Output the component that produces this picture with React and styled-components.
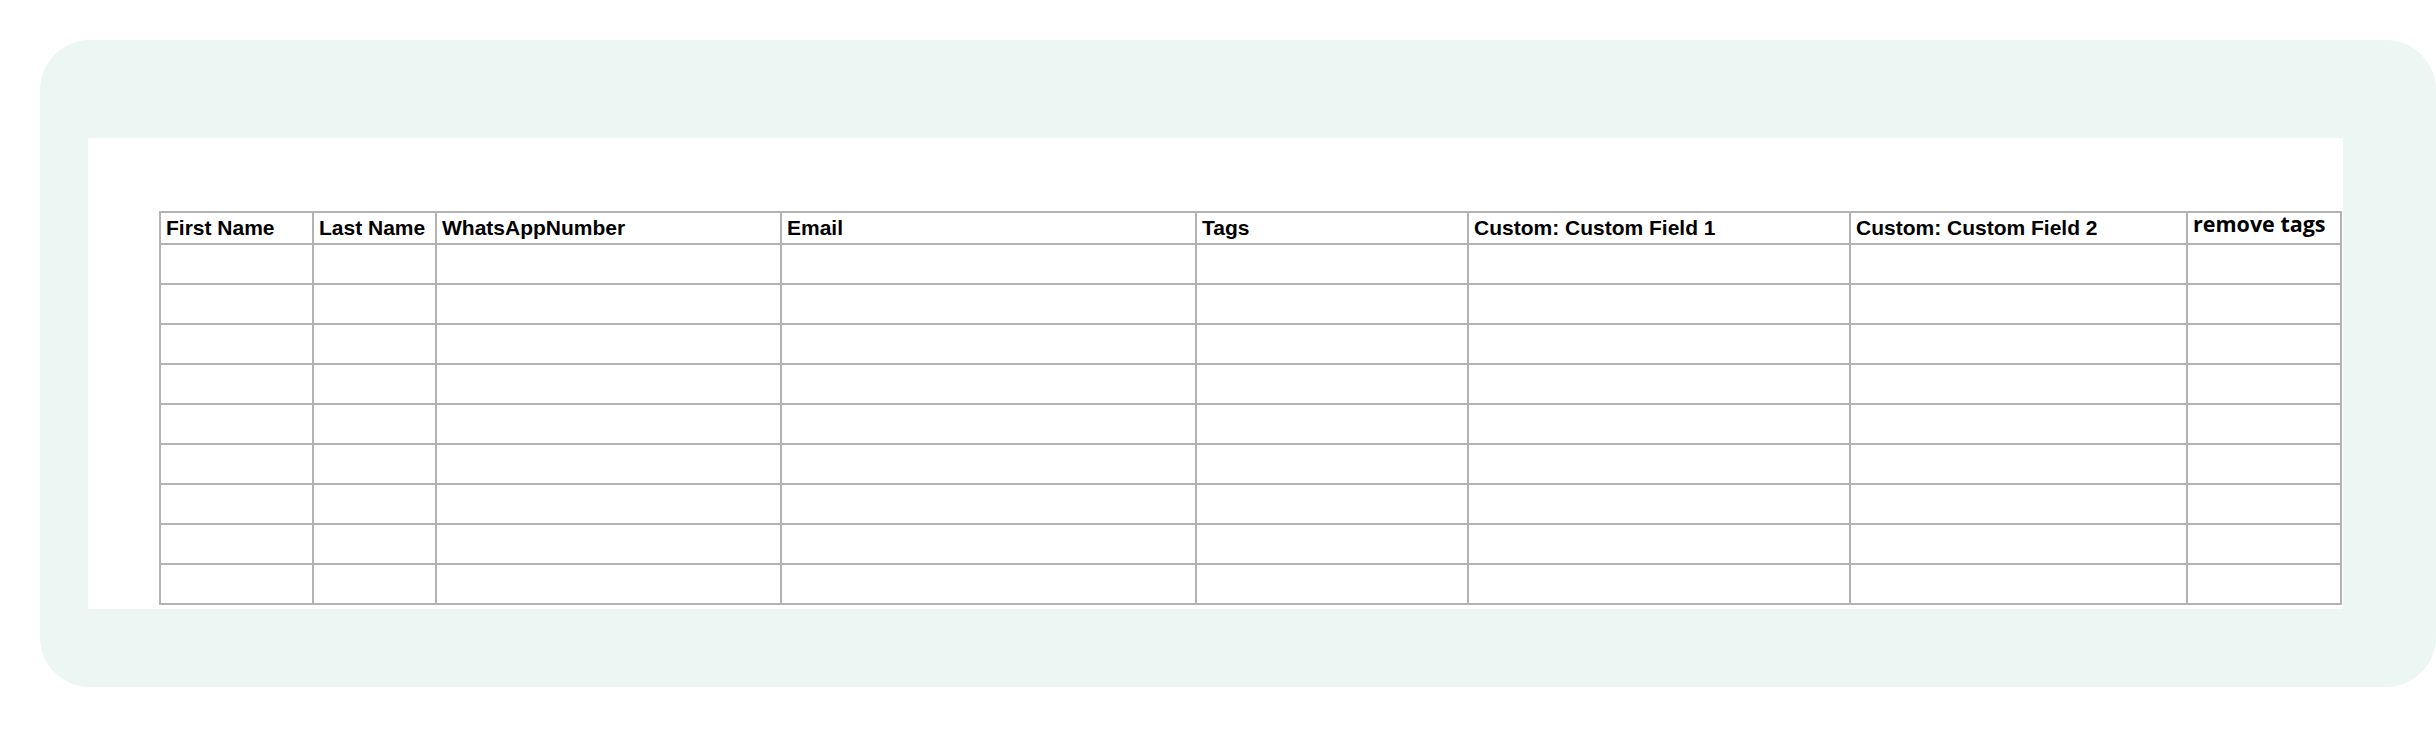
import React from 'react';
import styled, { createGlobalStyle } from 'styled-components';

const GlobalStyle = createGlobalStyle`
  html, body {
    margin: 0;
    padding: 0;
    background: #ffffff;
    font-family: 'Liberation Sans', Arial, sans-serif;
  }
`;

const Page = styled.div`
  padding: 40px 0 56px 40px;
  width: 2436px;
  box-sizing: border-box;
`;

const Card = styled.div`
  width: 2396px;
  box-sizing: border-box;
  background: #ecf6f2;
  border-radius: 50px;
  padding: 98px 93px 78px 48px;
`;

const Panel = styled.div`
  background: #ffffff;
  padding: 73px 0 4px 71px;
`;

const Sheet = styled.table`
  width: 2183px;
  table-layout: fixed;
  border-collapse: collapse;
  border: 2px solid #b2b2b2;
`;

// $w is the column pitch (border centre to border centre)
const HeadCell = styled.th`
  width: ${({ $w }) => $w - 12}px;
  border: 2px solid #b2b2b2;
  padding: 3px 5px;
  height: 24px;
  text-align: left;
  vertical-align: middle;
  font-family: 'Liberation Sans', Arial, sans-serif;
  font-weight: 700;
  font-size: 21px;
  line-height: 24px;
  color: #000000;
  white-space: nowrap;
  overflow: hidden;
`;

const ActionCell = styled(HeadCell)`
  vertical-align: top;
  padding: 0 5px;
  overflow: visible;
  font-family: 'Open Sans', sans-serif;
  font-size: 21.5px;
  line-height: 22px;
`;

const Cell = styled.td`
  border: 2px solid #b2b2b2;
  height: 38px;
  padding: 0;
`;

const columns = [
  { label: 'First Name', width: 153 },
  { label: 'Last Name', width: 123 },
  { label: 'WhatsAppNumber', width: 345 },
  { label: 'Email', width: 415 },
  { label: 'Tags', width: 272 },
  { label: 'Custom: Custom Field 1', width: 382 },
  { label: 'Custom: Custom Field 2', width: 337 },
];

const rows = Array.from({ length: 9 }, (_, i) => i);

const App = () => (
  <>
    <GlobalStyle />
    <Page>
      <Card>
        <Panel>
          <Sheet>
            <thead>
              <tr>
                {columns.map((c) => (
                  <HeadCell key={c.label} $w={c.width}>
                    {c.label}
                  </HeadCell>
                ))}
                <ActionCell $w={154}>remove tags</ActionCell>
              </tr>
            </thead>
            <tbody>
              {rows.map((r) => (
                <tr key={r}>
                  {columns.map((c) => (
                    <Cell key={c.label} />
                  ))}
                  <Cell />
                </tr>
              ))}
            </tbody>
          </Sheet>
        </Panel>
      </Card>
    </Page>
  </>
);

export default App;
